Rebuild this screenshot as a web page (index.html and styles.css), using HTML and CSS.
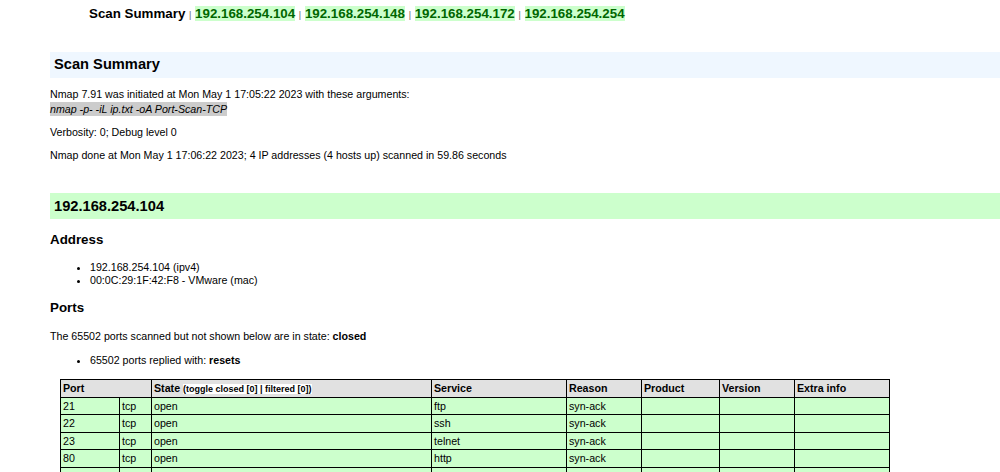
FILE: index.html
```html
<!DOCTYPE html>
<html>
<head>
<meta charset="utf-8">
<title>Nmap Scan Report - Scanned at Mon May 1 17:05:22 2023</title>
<link rel="stylesheet" href="styles.css">
</head>
<body>
<div class="menu"><a class="menu-title" href="#scansummary">Scan Summary</a> <span class="sep">|</span> <a class="up" href="#host_1">192.168.254.104</a> <span class="sep">|</span> <a class="up" href="#host_2">192.168.254.148</a> <span class="sep">|</span> <a class="up" href="#host_3">192.168.254.172</a> <span class="sep">|</span> <a class="up" href="#host_4">192.168.254.254</a></div>

<h1 class="band summary" id="scansummary">Scan Summary</h1>
<p class="para first">Nmap 7.91 was initiated at Mon May 1 17:05:22 2023 with these arguments:<br><i class="args">nmap -p- -iL ip.txt -oA Port-Scan-TCP</i></p>
<p class="para">Verbosity: 0; Debug level 0</p>
<p class="para">Nmap done at Mon May 1 17:06:22 2023; 4 IP addresses (4 hosts up) scanned in 59.86 seconds</p>

<h1 class="band host" id="host_1">192.168.254.104</h1>
<h2 class="sub">Address</h2>
<ul class="list">
<li>192.168.254.104 (ipv4)</li>
<li>00:0C:29:1F:42:F8 - VMware (mac)</li>
</ul>
<h2 class="sub">Ports</h2>
<p class="para">The 65502 ports scanned but not shown below are in state: <b>closed</b></p>
<ul class="list tight">
<li>65502 ports replied with: <b>resets</b></li>
</ul>

<table class="ports">
<colgroup>
<col class="c-port"><col class="c-proto"><col class="c-state"><col class="c-service"><col class="c-reason"><col class="c-product"><col class="c-version"><col class="c-extra">
</colgroup>
<tr class="head">
<td colspan="2">Port</td>
<td>State <span class="toggle">(toggle closed [0] | filtered [0])</span></td>
<td>Service</td>
<td>Reason</td>
<td>Product</td>
<td>Version</td>
<td>Extra info</td>
</tr>
<tr class="open">
<td>21</td><td>tcp</td><td>open</td><td>ftp</td><td>syn-ack</td><td></td><td></td><td></td>
</tr>
<tr class="open">
<td>22</td><td>tcp</td><td>open</td><td>ssh</td><td>syn-ack</td><td></td><td></td><td></td>
</tr>
<tr class="open">
<td>23</td><td>tcp</td><td>open</td><td>telnet</td><td>syn-ack</td><td></td><td></td><td></td>
</tr>
<tr class="open">
<td>80</td><td>tcp</td><td>open</td><td>http</td><td>syn-ack</td><td></td><td></td><td></td>
</tr>
<tr class="open">
<td>111</td><td>tcp</td><td>open</td><td>rpcbind</td><td>syn-ack</td><td></td><td></td><td></td>
</tr>
<tr class="open">
<td>139</td><td>tcp</td><td>open</td><td>netbios-ssn</td><td>syn-ack</td><td></td><td></td><td></td>
</tr>
</table>
</body>
</html>
```

FILE: styles.css
```css
html, body {
  background: #ffffff;
}

body {
  margin: 0;
  padding: 0 0 0 50px;
  font-family: "Liberation Sans", Arial, Helvetica, sans-serif;
  font-size: 8pt;
  color: #000000;
  overflow: hidden;
}

.menu {
  padding: 6px 0 0 39px;
  height: 15px;
  font-size: 10pt;
  font-weight: bold;
  line-height: 15px;
  white-space: nowrap;
}

.menu a {
  text-decoration: none;
}

.menu-title {
  color: #000000;
}

.up {
  color: #006600;
  background: #ccffcc;
}

.sep {
  font-size: 9px;
  font-weight: normal;
  line-height: 1;
  color: #666666;
}

.band {
  margin: 31px 0 0;
  padding: 3px 4px 5px;
  font-size: 11pt;
  font-weight: bold;
  line-height: 18px;
}

.summary {
  background: #eff7ff;
}

.host {
  margin-top: 30px;
  padding: 4px;
  background: #ccffcc;
}

.para {
  margin: 8px 0;
  line-height: 15px;
}

.para.first {
  margin-top: 9px;
}

.args {
  background: #cccccc;
  padding: 1px 0;
}

.sub {
  margin: 13px 0;
  font-size: 10pt;
  font-weight: bold;
  line-height: 16px;
}

.list {
  margin: 13px 0;
  padding-left: 40px;
  line-height: 13px;
}

.list.tight {
  margin: 10px 0 12px;
}

.ports {
  margin-left: 10px;
  width: 829px;
  table-layout: fixed;
  border-collapse: collapse;
  font-size: 8pt;
}

.ports td {
  border: 1px solid #000000;
  padding: 2px 2px;
  line-height: 12.5px;
  vertical-align: top;
  white-space: nowrap;
  overflow: hidden;
}

.c-port { width: 59px; }
.c-proto { width: 32px; }
.c-state { width: 280px; }
.c-service { width: 135px; }
.c-reason { width: 75px; }
.c-product { width: 78px; }
.c-version { width: 75px; }
.c-extra { width: 95px; }

.head td {
  background: #e1e1e1;
  font-weight: bold;
}

.toggle {
  font-size: 9px;
  font-weight: bold;
  line-height: 1;
  background: #ffffff;
}

.open td {
  background: #ccffcc;
}
```
